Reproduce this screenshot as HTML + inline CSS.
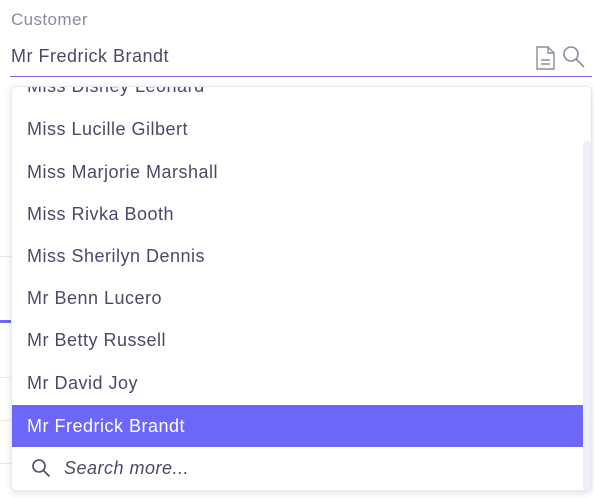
<!DOCTYPE html>
<html><head><style>
*{margin:0;padding:0;box-sizing:border-box}
body{width:594px;height:498px;background:#fff;font-family:"Liberation Sans",sans-serif;position:relative;overflow:hidden}
.lbl{position:absolute;left:11px;top:10px;font-size:17px;letter-spacing:0.4px;color:#8b8ba0}
.val{position:absolute;left:11px;top:46px;font-size:18px;letter-spacing:0.5px;color:#4a4a68}
.line{position:absolute;left:10px;top:76px;width:582px;height:1px;background:#6b67d6}
.bg{position:absolute;background:#e6e6ee}
.dd{position:absolute;left:11px;top:86px;width:581px;height:405px;background:#fff;border:1px solid #e8e8f0;border-radius:5px;box-shadow:0 2px 8px rgba(0,0,0,.12);overflow:hidden}
.it{position:absolute;left:0;width:572px;height:42px;line-height:42px;padding-left:15px;font-size:18px;letter-spacing:0.5px;color:#4a4a68}
.sel{background:#6c67f9;color:#fff}
.sb{position:absolute;right:0;top:54px;width:8px;height:350px;background:#eceef9;border-radius:3px}
</style></head><body>
<div class="lbl">Customer</div>
<div class="val">Mr Fredrick Brandt</div>
<svg style="position:absolute;left:535px;top:46px" width="22" height="24" viewBox="0 0 22 24" fill="none" stroke="#8b8ba0" stroke-width="1.4"><path d="M2 1h11l6 6v16H2z"/><path d="M13 1v6h6"/><path d="M6 14h9M6 18h9"/></svg>
<svg style="position:absolute;left:562px;top:45px" width="24" height="24" viewBox="0 0 24 24" fill="none" stroke="#8b8ba0" stroke-width="1.6"><circle cx="9" cy="9" r="7"/><path d="M14 14l8 8"/></svg>
<div class="line"></div>
<div class="bg" style="left:0;top:256px;width:11px;height:1px"></div>
<div class="bg" style="left:0;top:320px;width:11px;height:3px;background:#6c67f9"></div>
<div class="bg" style="left:0;top:377px;width:11px;height:1px"></div>
<div class="bg" style="left:0;top:420px;width:11px;height:1px"></div>
<div class="bg" style="left:0;top:463px;width:11px;height:1px"></div>
<div class="dd">
<div class="it" style="top:-22px">Miss Disney Leonard</div>
<div class="it" style="top:21px">Miss Lucille Gilbert</div>
<div class="it" style="top:64px">Miss Marjorie Marshall</div>
<div class="it" style="top:106px">Miss Rivka Booth</div>
<div class="it" style="top:148px">Miss Sherilyn Dennis</div>
<div class="it" style="top:190px">Mr Benn Lucero</div>
<div class="it" style="top:232px">Mr Betty Russell</div>
<div class="it" style="top:275px">Mr David Joy</div>
<div class="it sel" style="top:318px">Mr Fredrick Brandt</div>
<div class="it" style="top:360px;padding-left:52px;font-style:italic">Search more...</div>
<svg style="position:absolute;left:19px;top:371px" width="20" height="20" viewBox="0 0 20 20" fill="none" stroke="#4a4a68" stroke-width="1.6"><circle cx="8" cy="8" r="6"/><path d="M12.5 12.5l6 6"/></svg>
<div class="sb"></div>
</div>
</body></html>
